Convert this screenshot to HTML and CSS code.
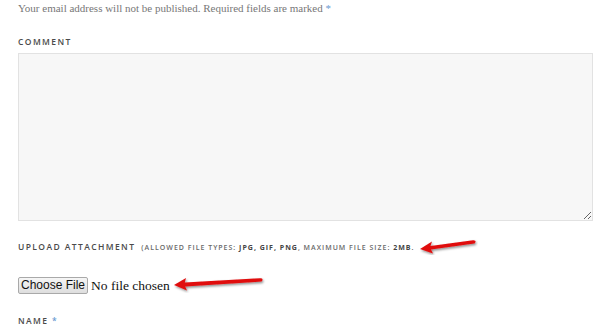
FILE: index.html
```html
<!DOCTYPE html>
<html>
<head>
<meta charset="utf-8">
<link rel="stylesheet" href="styles.css">
</head>
<body>
<div class="page">
  <p class="note">Your email address will not be published. Required fields are marked <span class="req">*</span></p>
  <label class="label label-comment">Comment</label>
  <textarea class="comment"></textarea>
  <div class="upload-row">
    <label class="label">Upload attachment</label>
    <span class="allowed">(Allowed file types: <b>jpg, gif, png</b>, maximum file size: <b>2MB</b>.</span>
  </div>
  <div class="file-row">
    <input type="file" class="file">
  </div>
  <label class="label label-name">Name <span class="req">*</span></label>

  <svg class="arrow arrow-1" width="60" height="20" viewBox="0 0 60 20">
    <defs>
      <filter id="sh" x="-20%" y="-50%" width="140%" height="200%">
        <feDropShadow dx="1" dy="1.5" stdDeviation="1" flood-color="#000" flood-opacity="0.45"/>
      </filter>
    </defs>
    <path d="M2 14 L14 6.5 L12.5 11 L55 5.2 Q58 5 57.5 7 L56.5 8.5 L13 14.5 L15 18.5 Z" fill="#e00f0f" filter="url(#sh)"/>
  </svg>
  <svg class="arrow arrow-2" width="94" height="20" viewBox="0 0 94 20">
    <path d="M2 12 L14 5 L12.8 9.4 L88 5.2 Q91 5 90.5 7.2 L89.5 8.6 L13.2 13.5 L15 17.5 Z" fill="#e00f0f" filter="url(#sh)"/>
  </svg>
</div>
</body>
</html>
```
FILE: styles.css
```css
html, body {
  margin: 0;
  padding: 0;
  background: #fff;
}
.page {
  position: relative;
  padding: 0 7px 0 18px;
  display: flex;
  flex-direction: column;
  align-items: flex-start;
}
.note {
  margin: 0;
  font-family: "Liberation Serif", serif;
  font-size: 11px;
  line-height: 16px;
  color: #777;
}
.req {
  color: #6b9bd1;
}
.label {
  font-family: "Open Sans", "Liberation Sans", sans-serif;
  font-weight: 600;
  font-size: 8.5px;
  letter-spacing: 1.4px;
  text-transform: uppercase;
  color: #4a4a4a;
  line-height: 12px;
}
.label-comment {
  margin-top: 20px;
}
.comment {
  margin-top: 5px;
  box-sizing: border-box;
  width: 575px;
  height: 168px;
  background: #f7f7f7;
  border: 1px solid #e2e2e2;
  padding: 0;
  resize: both;
}
.upload-row {
  margin-top: 20px;
  display: flex;
  align-items: baseline;
  gap: 6px;
}
.allowed {
  font-family: "Open Sans", "Liberation Sans", sans-serif;
  font-size: 7px;
  font-weight: 600;
  letter-spacing: 1px;
  text-transform: uppercase;
  color: #6a6a6a;
  line-height: 12px;
}
.allowed b {
  color: #444;
  font-weight: 700;
}
.file-row {
  margin-top: 23px;
  height: 16px;
  display: flex;
  align-items: center;
}
.file {
  font-family: "Liberation Serif", serif;
  font-size: 13.5px;
  color: #111;
  line-height: 16px;
  padding: 0;
}
.file::file-selector-button {
  font-family: "Liberation Sans", Arial, sans-serif;
  font-size: 12px;
  height: 17px;
  padding: 0 2px;
  margin-right: 3px;
  border: 1px solid #a9a9a9;
  border-radius: 2px;
  background: linear-gradient(#f6f6f6, #dedede);
  color: #111;
}
.label-name {
  margin-top: 22px;
}
.arrow {
  position: absolute;
}
.arrow-1 {
  left: 418px;
  top: 235px;
}
.arrow-2 {
  left: 172px;
  top: 273px;
}
```
